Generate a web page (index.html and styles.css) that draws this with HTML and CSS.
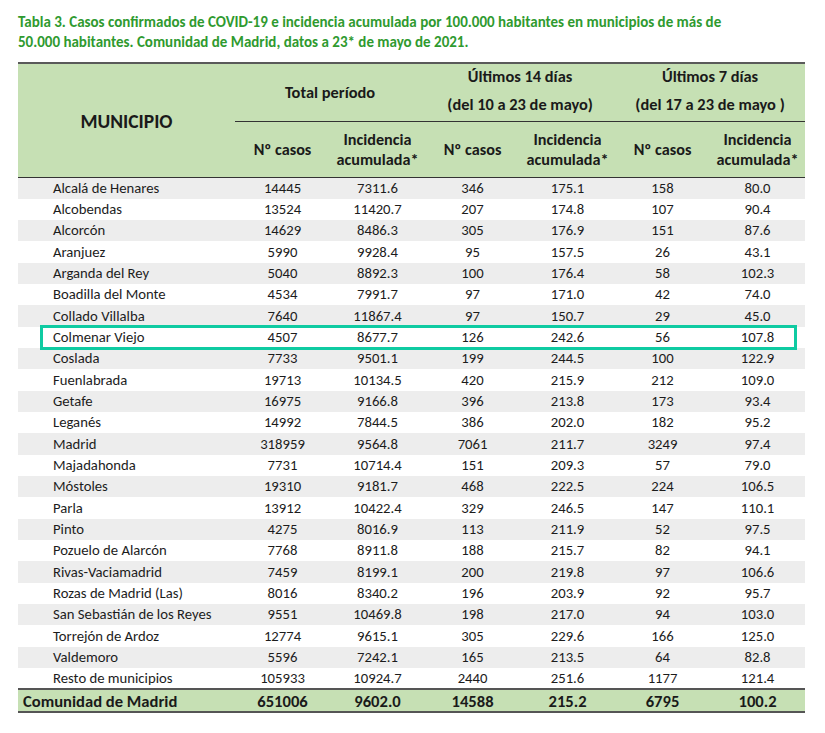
FILE: index.html
```html
<!DOCTYPE html>
<html lang="es">
<head>
<meta charset="utf-8">
<title>Tabla 3</title>
<link rel="stylesheet" href="styles.css">
</head>
<body>
<div class="page">
  <p class="title">Tabla 3. Casos confirmados de COVID-19 e incidencia acumulada por 100.000 habitantes en municipios de más de<br>50.000 habitantes. Comunidad de Madrid, datos a 23* de mayo de 2021.</p>
  <div class="wrap">
    <table class="data">
      <colgroup>
        <col class="c-name"><col class="c-num"><col class="c-num"><col class="c-num"><col class="c-num"><col class="c-num"><col class="c-num">
      </colgroup>
      <thead>
        <tr class="h1">
          <th rowspan="2" class="muni">MUNICIPIO</th>
          <th colspan="2" class="grp"><span class="single">Total período</span></th>
          <th colspan="2" class="grp"><span class="l1">Últimos 14 días</span><span class="l2">(del 10 a 23 de mayo)</span></th>
          <th colspan="2" class="grp"><span class="l1">Últimos 7 días</span><span class="l2">(del 17 a 23 de mayo )</span></th>
        </tr>
        <tr class="h2">
          <th>Nº casos</th><th>Incidencia<br>acumulada*</th>
          <th>Nº casos</th><th>Incidencia<br>acumulada*</th>
          <th>Nº casos</th><th>Incidencia<br>acumulada*</th>
        </tr>
      </thead>
      <tbody>
        <tr><td class="name">Alcalá de Henares</td><td>14445</td><td>7311.6</td><td>346</td><td>175.1</td><td>158</td><td>80.0</td></tr>
        <tr><td class="name">Alcobendas</td><td>13524</td><td>11420.7</td><td>207</td><td>174.8</td><td>107</td><td>90.4</td></tr>
        <tr><td class="name">Alcorcón</td><td>14629</td><td>8486.3</td><td>305</td><td>176.9</td><td>151</td><td>87.6</td></tr>
        <tr><td class="name">Aranjuez</td><td>5990</td><td>9928.4</td><td>95</td><td>157.5</td><td>26</td><td>43.1</td></tr>
        <tr><td class="name">Arganda del Rey</td><td>5040</td><td>8892.3</td><td>100</td><td>176.4</td><td>58</td><td>102.3</td></tr>
        <tr><td class="name">Boadilla del Monte</td><td>4534</td><td>7991.7</td><td>97</td><td>171.0</td><td>42</td><td>74.0</td></tr>
        <tr><td class="name">Collado Villalba</td><td>7640</td><td>11867.4</td><td>97</td><td>150.7</td><td>29</td><td>45.0</td></tr>
        <tr><td class="name">Colmenar Viejo</td><td>4507</td><td>8677.7</td><td>126</td><td>242.6</td><td>56</td><td>107.8</td></tr>
        <tr><td class="name">Coslada</td><td>7733</td><td>9501.1</td><td>199</td><td>244.5</td><td>100</td><td>122.9</td></tr>
        <tr><td class="name">Fuenlabrada</td><td>19713</td><td>10134.5</td><td>420</td><td>215.9</td><td>212</td><td>109.0</td></tr>
        <tr><td class="name">Getafe</td><td>16975</td><td>9166.8</td><td>396</td><td>213.8</td><td>173</td><td>93.4</td></tr>
        <tr><td class="name">Leganés</td><td>14992</td><td>7844.5</td><td>386</td><td>202.0</td><td>182</td><td>95.2</td></tr>
        <tr><td class="name">Madrid</td><td>318959</td><td>9564.8</td><td>7061</td><td>211.7</td><td>3249</td><td>97.4</td></tr>
        <tr><td class="name">Majadahonda</td><td>7731</td><td>10714.4</td><td>151</td><td>209.3</td><td>57</td><td>79.0</td></tr>
        <tr><td class="name">Móstoles</td><td>19310</td><td>9181.7</td><td>468</td><td>222.5</td><td>224</td><td>106.5</td></tr>
        <tr><td class="name">Parla</td><td>13912</td><td>10422.4</td><td>329</td><td>246.5</td><td>147</td><td>110.1</td></tr>
        <tr><td class="name">Pinto</td><td>4275</td><td>8016.9</td><td>113</td><td>211.9</td><td>52</td><td>97.5</td></tr>
        <tr><td class="name">Pozuelo de Alarcón</td><td>7768</td><td>8911.8</td><td>188</td><td>215.7</td><td>82</td><td>94.1</td></tr>
        <tr><td class="name">Rivas-Vaciamadrid</td><td>7459</td><td>8199.1</td><td>200</td><td>219.8</td><td>97</td><td>106.6</td></tr>
        <tr><td class="name">Rozas de Madrid (Las)</td><td>8016</td><td>8340.2</td><td>196</td><td>203.9</td><td>92</td><td>95.7</td></tr>
        <tr><td class="name">San Sebastián de los Reyes</td><td>9551</td><td>10469.8</td><td>198</td><td>217.0</td><td>94</td><td>103.0</td></tr>
        <tr><td class="name">Torrejón de Ardoz</td><td>12774</td><td>9615.1</td><td>305</td><td>229.6</td><td>166</td><td>125.0</td></tr>
        <tr><td class="name">Valdemoro</td><td>5596</td><td>7242.1</td><td>165</td><td>213.5</td><td>64</td><td>82.8</td></tr>
        <tr><td class="name">Resto de municipios</td><td>105933</td><td>10924.7</td><td>2440</td><td>251.6</td><td>1177</td><td>121.4</td></tr>
      </tbody>
      <tfoot>
        <tr><td class="name">Comunidad de Madrid</td><td>651006</td><td>9602.0</td><td>14588</td><td>215.2</td><td>6795</td><td>100.2</td></tr>
      </tfoot>
    </table>
    <div class="highlight"></div>
  </div>
</div>
</body>
</html>
```

FILE: styles.css
```css
html, body {
  margin: 0;
  padding: 0;
  background: #ffffff;
}
body {
  font-family: Carlito, Lato, "Open Sans", sans-serif;
  color: #222222;
}
.page {
  padding: 12px 0 0 18px;
  width: 787px;
}
.title {
  margin: 0;
  color: #2f9a2f;
  font-weight: 700;
  font-size: 15px;
  line-height: 20px;
  white-space: nowrap;
}
.wrap {
  position: relative;
  margin-top: 10px;
}
.data {
  border-collapse: collapse;
  table-layout: fixed;
  width: 787px;
}
.c-name { width: 217px; }
.c-num { width: 95px; }

thead th {
  background: #c6e0b4;
  font-weight: 700;
  color: #1a1a1a;
  padding: 0;
  text-align: center;
}
thead tr.h1 th {
  border-top: 2px solid #5a5a5a;
}
.h1 { height: 57px; }
.h2 { height: 56px; }
.muni {
  font-size: 19.5px;
  border-bottom: 1.5px solid #333333;
}
.grp {
  border-bottom: 1.5px solid #333333;
  font-size: 16.4px;
  vertical-align: top;
}
.grp .single {
  display: block;
  line-height: 57px;
}
.grp .l1 {
  display: block;
  line-height: 25px;
}
.grp .l2 {
  display: block;
  line-height: 31px;
}
.h2 th {
  font-size: 16.2px;
  line-height: 20px;
  border-bottom: 1.5px solid #333333;
}

tbody tr { height: 21.33px; }
tbody td {
  font-size: 14.7px;
  padding: 0;
  text-align: center;
  color: #1c1c1c;
  line-height: 17px;
}
tbody tr:nth-child(odd) td { background: #ededed; }
tbody td.name {
  text-align: left;
  padding-left: 35px;
  white-space: nowrap;
}

tfoot tr { height: 23px; }
tfoot td {
  background: #c6e0b4;
  font-weight: 700;
  font-size: 16.6px;
  text-align: center;
  color: #1a1a1a;
  padding: 0;
  border-top: 2px solid #555555;
  border-bottom: 2px solid #555555;
}
tfoot td.name {
  text-align: left;
  padding-left: 5px;
}

.highlight {
  position: absolute;
  left: 22px;
  top: 263px;
  width: 751px;
  height: 19px;
  border: 3.5px solid #0fcba2;
  pointer-events: none;
}
```
